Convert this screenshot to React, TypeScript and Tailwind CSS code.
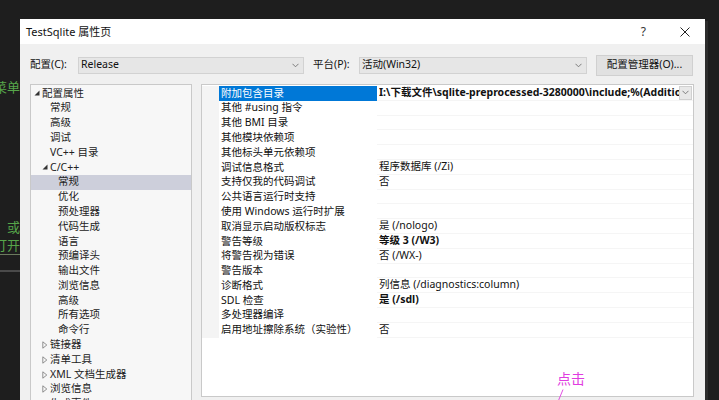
import React from "react"

const font = { fontFamily: '"Noto Sans", "Noto Sans CJK SC", sans-serif' }

type TreeItem = { label: string; level: number; arrow?: "open" | "closed"; selected?: boolean }

const tree: TreeItem[] = [
  { label: "配置属性", level: 0, arrow: "open" },
  { label: "常规", level: 1 },
  { label: "高级", level: 1 },
  { label: "调试", level: 1 },
  { label: "VC++ 目录", level: 1 },
  { label: "C/C++", level: 1, arrow: "open" },
  { label: "常规", level: 2, selected: true },
  { label: "优化", level: 2 },
  { label: "预处理器", level: 2 },
  { label: "代码生成", level: 2 },
  { label: "语言", level: 2 },
  { label: "预编译头", level: 2 },
  { label: "输出文件", level: 2 },
  { label: "浏览信息", level: 2 },
  { label: "高级", level: 2 },
  { label: "所有选项", level: 2 },
  { label: "命令行", level: 2 },
  { label: "链接器", level: 1, arrow: "closed" },
  { label: "清单工具", level: 1, arrow: "closed" },
  { label: "XML 文档生成器", level: 1, arrow: "closed" },
  { label: "浏览信息", level: 1, arrow: "closed" },
  { label: "生成事件", level: 1, arrow: "closed" },
]

type Prop = { name: string; value?: string; bold?: boolean }

const props: Prop[] = [
  { name: "附加包含目录", value: "I:\\下载文件\\sqlite-preprocessed-3280000\\include;%(AdditionalIncludeDirectories)", bold: true },
  { name: "其他 #using 指令" },
  { name: "其他 BMI 目录" },
  { name: "其他模块依赖项" },
  { name: "其他标头单元依赖项" },
  { name: "调试信息格式", value: "程序数据库 (/Zi)" },
  { name: "支持仅我的代码调试", value: "否" },
  { name: "公共语言运行时支持" },
  { name: "使用 Windows 运行时扩展" },
  { name: "取消显示启动版权标志", value: "是 (/nologo)" },
  { name: "警告等级", value: "等级 3 (/W3)", bold: true },
  { name: "将警告视为错误", value: "否 (/WX-)" },
  { name: "警告版本" },
  { name: "诊断格式", value: "列信息 (/diagnostics:column)" },
  { name: "SDL 检查", value: "是 (/sdl)", bold: true },
  { name: "多处理器编译" },
  { name: "启用地址擦除系统（实验性）", value: "否" },
]

function Chevron() {
  return (
    <svg width="7" height="5" viewBox="0 0 7 5" className="shrink-0">
      <path d="M0.5 0.8 L3.5 3.8 L6.5 0.8" fill="none" stroke="#707070" strokeWidth="0.9" />
    </svg>
  )
}

function Arrow({ kind }: { kind: "open" | "closed" }) {
  if (kind === "open") {
    return (
      <svg width="6" height="6" viewBox="0 0 6 6" className="shrink-0">
        <path d="M5.5 0.5 L5.5 5.5 L0.5 5.5 Z" fill="#333" />
      </svg>
    )
  }
  return (
    <svg width="6" height="8" viewBox="0 0 6 8" className="shrink-0">
      <path d="M0.8 0.8 L4.8 4 L0.8 7.2 Z" fill="none" stroke="#777" strokeWidth="0.8" />
    </svg>
  )
}

export default function App() {
  return (
    <div className="relative flex h-[400px] w-[719px] overflow-hidden bg-[#1e1e1e]" style={font}>
      {/* editor behind the dialog */}
      <div className="flex w-[20px] shrink-0 flex-col overflow-hidden text-[13px] text-[#57a64a]">
        <div className="mt-[78px] flex justify-end whitespace-nowrap leading-[18px]">菜单</div>
        <div className="mt-[122px] flex justify-end whitespace-nowrap leading-[18px]">或</div>
        <div className="flex justify-end whitespace-nowrap border-b border-[#6b7b5e] leading-[18px]">打开</div>
        <div className="mt-[15px] h-[2px] w-full bg-[#4a4a4a]" />
      </div>

      {/* dialog */}
      <div className="mt-[19px] flex h-[381px] w-[685px] shrink-0 flex-col bg-[#f0f0f0] text-[10.5px] text-[#111]">
        <div className="flex h-[25px] shrink-0 items-center bg-white pl-[6px] pt-[1px] text-[11px]">
          <span>TestSqlite 属性页</span>
          <span className="ml-auto mr-[34px] text-[12px] text-[#333]">?</span>
          <svg width="10" height="10" viewBox="0 0 10 10" className="mr-[15px]">
            <path d="M0.5 0.5 L9.5 9.5 M9.5 0.5 L0.5 9.5" stroke="#222" strokeWidth="1" />
          </svg>
        </div>

        <div className="flex h-[40px] shrink-0 items-center pl-[10px] pt-[2px]">
          <span className="w-[48px]">配置(C):</span>
          <div className="flex h-[17px] w-[226px] items-center border border-[#d2d2d2] bg-[#e6e6e6] pl-[2px] pr-[4px]">
            <span>Release</span>
            <span className="ml-auto"><Chevron /></span>
          </div>
          <span className="ml-[9px] w-[46px]">平台(P):</span>
          <div className="flex h-[17px] w-[228px] items-center border border-[#d2d2d2] bg-[#e6e6e6] pl-[2px] pr-[4px]">
            <span>活动(Win32)</span>
            <span className="ml-auto"><Chevron /></span>
          </div>
          <div className="ml-[9px] flex h-[21px] w-[97px] items-center justify-center border border-[#d0d0d0] bg-[#e1e1e1]">
            配置管理器(O)...
          </div>
        </div>

        <div className="flex min-h-0 flex-1 pl-[10px]">
          {/* tree */}
          <div className="w-[162px] shrink-0 overflow-hidden border border-b-0 border-[#c9c9c9] bg-[#f7f7f7] pt-[1px] text-[#222]">
            {tree.map((t, i) => (
              <div
                key={i}
                className={`flex h-[14.8px] items-center whitespace-nowrap ${t.selected ? "bg-[#cdcfdb]" : ""}`}
                style={{ paddingLeft: 3 + t.level * 8 }}
              >
                <span className="flex w-[8px] items-center">{t.arrow && <Arrow kind={t.arrow} />}</span>
                <span>{t.label}</span>
              </div>
            ))}
          </div>

          {/* property grid */}
          <div className="ml-[9px] flex h-[313px] w-[493px] shrink-0 flex-col border border-[#c9c9c9] bg-white pt-[1px]">
            {props.map((p, i) => (
              <div key={i} className="flex h-[14.8px] items-center">
                <div className="h-full w-[17px] shrink-0 bg-[#f4f4f4]" />
                <div
                  className={`flex h-full w-[158px] shrink-0 items-center whitespace-nowrap pl-[2px] ${
                    i === 0 ? "bg-[#0078d7] text-white" : ""
                  }`}
                >
                  {p.name}
                </div>
                <div className="flex h-full min-w-0 flex-1 items-center border-b border-[#f5f5f5] pl-[2px]">
                  <span className={`min-w-0 flex-1 overflow-hidden whitespace-nowrap ${p.bold ? "font-bold" : ""}`}>
                    {p.value}
                  </span>
                  {i === 0 && (
                    <span className="mr-[1px] flex h-[14px] w-[13px] shrink-0 items-center justify-center border border-[#d0d0d0] bg-[#e8e8e8]">
                      <Chevron />
                    </span>
                  )}
                </div>
              </div>
            ))}
          </div>
        </div>
      </div>
      <div className="mt-[21px] h-[379px] w-[3px] bg-[#2c2c2c]" />

      {/* annotation */}
      <div className="absolute left-[557px] top-[369px] text-[14px] leading-[18px] text-[#e03ce0]" style={{ fontFamily: '"Noto Sans CJK SC", sans-serif' }}>
        点击
      </div>
      <svg className="absolute left-[555px] top-[389px]" width="12" height="12" viewBox="0 0 12 12">
        <path d="M8 0.5 L3.5 11.5" stroke="#e03ce0" strokeWidth="0.9" />
      </svg>
    </div>
  )
}
